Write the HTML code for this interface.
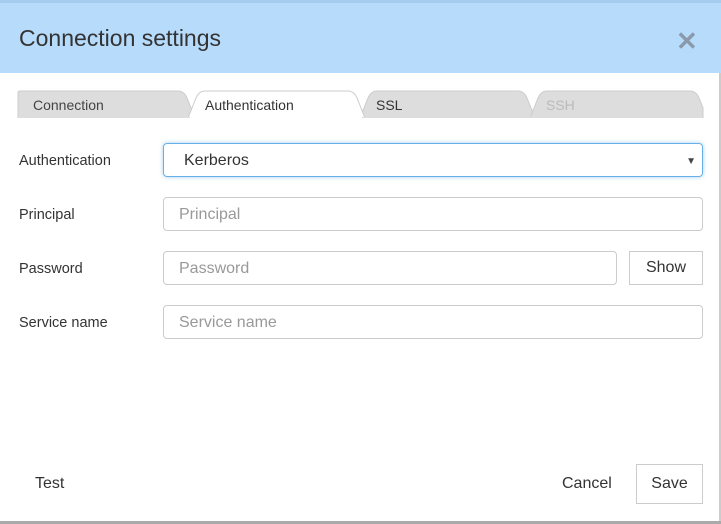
<!DOCTYPE html>
<html><head><meta charset="utf-8"><style>
body{margin:0;width:721px;height:524px;overflow:hidden;background:#fff;font-family:"Liberation Sans",sans-serif;position:relative}
.hdr{position:absolute;left:0;top:0;width:721px;height:73px;background:#b7dbfb;border-top:3px solid #a6cdf0;box-sizing:border-box}
.hdr h1{margin:0;position:absolute;left:19px;top:22px;font-size:23px;font-weight:normal;color:#333}
.x{position:absolute;left:676px;top:23px;font-size:26px;color:#8a9aab;font-weight:bold}
.tab{position:absolute;font-size:14px}
.lbl{position:absolute;left:19px;font-size:14.5px;color:#333}
.in{position:absolute;left:163px;height:34px;box-sizing:border-box;border:1px solid #ccc;border-radius:4px;font-size:16px;color:#999;padding:8px 15px}
.btn{position:absolute;box-sizing:border-box;border:1px solid #ccc;font-size:16px;color:#333;text-align:center}
.edge{position:absolute;right:0;top:73px;width:2px;height:450px;background:#ccc}
.bottom{position:absolute;left:0;top:521px;width:721px;height:3px;background:#aaa}
</style></head><body>
<div class="hdr"><h1>Connection settings</h1><div class="x">✕</div></div>
<svg style="position:absolute;left:0;top:90px" width="721" height="28">
<path d="M18 28 L18 3 Q18 1 20 1 L178 1 Q184 1 187 8 L195 28 Z" fill="#dddddd" stroke="#ccc"/>
<path d="M360 28 L368 8 Q371 1 377 1 L518 1 Q524 1 527 8 L535 28 Z" fill="#dddddd" stroke="#ccc"/>
<path d="M530 28 L538 8 Q541 1 547 1 L690 1 Q696 1 699 8 L703 18 L703 28 Z" fill="#dddddd" stroke="#ccc"/>
<path d="M188 28 L196 8 Q199 1 205 1 L348 1 Q354 1 357 8 L365 28 Z" fill="#fff" stroke="#ccc"/>
<rect x="18" y="27" width="685" height="1" fill="#ddd"/>
<rect x="190" y="27" width="172" height="2" fill="#fff"/>
</svg>
<div class="tab" style="left:33px;top:97px;color:#444">Connection</div>
<div class="tab" style="left:205px;top:97px;color:#333">Authentication</div>
<div class="tab" style="left:376px;top:97px;color:#333">SSL</div>
<div class="tab" style="left:546px;top:97px;color:#bbb">SSH</div>

<div class="lbl" style="top:153px">Authentication</div>
<div class="in" style="top:143px;width:540px;border-color:#66afe9;box-shadow:0 0 4px rgba(102,175,233,.6);color:#333;padding-left:20px">Kerberos<span style="position:absolute;right:6px;top:12px;font-size:10px;color:#444">▼</span></div>
<div class="lbl" style="top:207px">Principal</div>
<div class="in" style="top:197px;width:540px">Principal</div>
<div class="lbl" style="top:261px">Password</div>
<div class="in" style="top:251px;width:454px">Password</div>
<div class="btn" style="left:629px;top:251px;width:74px;height:34px;padding-top:7px">Show</div>
<div class="lbl" style="top:315px">Service name</div>
<div class="in" style="top:305px;width:540px">Service name</div>

<div style="position:absolute;left:35px;top:475px;font-size:16px;color:#333">Test</div>
<div style="position:absolute;left:562px;top:475px;font-size:16px;color:#333">Cancel</div>
<div class="btn" style="left:636px;top:464px;width:67px;height:40px;padding-top:10px">Save</div>
<div class="edge"></div><div class="bottom"></div>
</body></html>
